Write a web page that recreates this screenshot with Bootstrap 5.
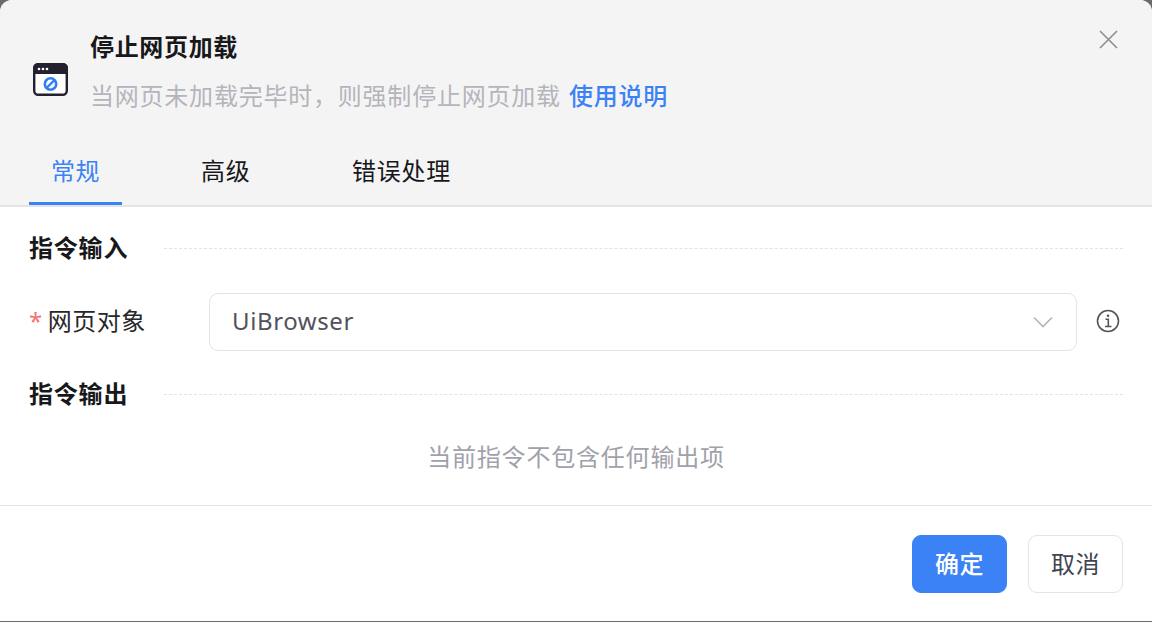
<!DOCTYPE html>
<html lang="zh">
<head>
<meta charset="utf-8">
<title>停止网页加载</title>
<link href="https://cdn.jsdelivr.net/npm/bootstrap@5.3.0/dist/css/bootstrap.min.css" rel="stylesheet">
<style>
html,body{height:100%;margin:0;}
body{background:#6b6b6b;font-family:"Noto Sans","Noto Sans CJK SC",sans-serif;font-size:24px;overflow:hidden;}
.dlg{width:1152px;height:621px;background:#fff;border-radius:12px 12px 0 0;overflow:hidden;display:flex;flex-direction:column;}
.dlg-head{height:207px;background:#f4f4f5;border-bottom:2px solid #e4e4e7;padding:0 29px;position:relative;flex:none;}
.head-info{height:139px;padding-top:28px;}
.head-icon{width:35px;height:33px;margin:35px 22px 0 4px;flex:none;}
.head-title{font-size:24px;font-weight:700;line-height:38px;color:#18181b;letter-spacing:.67px;}
.head-sub{font-size:24px;line-height:38px;margin-top:10px;color:#b4b5bb;letter-spacing:.78px;white-space:nowrap;font-family:"Noto Sans CJK SC","Noto Sans",sans-serif;}
.head-sub a{color:#3b82f6;text-decoration:none;font-weight:500;letter-spacing:.75px;margin-left:2px;}
.close-x{position:absolute;left:1098px;top:29px;width:21px;height:21px;}
.tab-row{height:66px;gap:56.7px;}
.tab-item{padding:0 22.5px;color:#18181b;line-height:64px;letter-spacing:.7px;white-space:nowrap;}
.tab-item.on{color:#3b82f6;border-bottom:3px solid #3b82f6;height:66px;padding:0 22px;letter-spacing:.4px;}
.dlg-body{flex:1 1 auto;padding:0 29px;}
.sect-row{height:36px;}
.sect-title{font-weight:700;color:#18181b;letter-spacing:.8px;line-height:34px;padding-bottom:2px;font-size:24px;}
.sect-line{border-top:1px dashed #e2e2e8;margin-left:36px;position:relative;top:-1px;}
.field{height:58px;}
.field-label{width:180px;flex:none;color:#27272a;letter-spacing:.5px;white-space:nowrap;padding-bottom:2px;}
.req{color:#f87171;margin-right:5px;}
.sel-box{height:58px;border:1px solid #e4e4e7;border-radius:9px;padding:0 22px 0 22px;color:#52525b;letter-spacing:.6px;}
.sel-text{padding-bottom:2px;}
.info-ic{width:24px;height:24px;margin:-2px 3px 0 19px;flex:none;}
.empty-msg{color:#a1a1aa;text-align:center;letter-spacing:.8px;line-height:36px;}
.dlg-foot{height:116px;border-top:1px solid #e4e4e7;padding:29px 29px 0;gap:21px;flex:none;}
.foot-btn{height:58px;width:95px;border-radius:9px;font-size:24px;padding:0;line-height:1;letter-spacing:.5px;}
.foot-ok{background:#3b82f6;border:1px solid #3b82f6;color:#fff;font-weight:500;}
.foot-no{background:#fff;border:1px solid #e4e4e7;color:#3f4652;}
</style>
</head>
<body>
<div class="dlg">
  <div class="dlg-head">
    <div class="head-info d-flex">
      <svg class="head-icon" viewBox="0 0 35 33" fill="none">
        <rect x="1.200" y="1.200" width="32.600" height="30.600" rx="4" fill="#fff" stroke="#23202f" stroke-width="2.400"/>
        <path d="M0 5a5 5 0 0 1 5-5h25a5 5 0 0 1 5 5v6H0z" fill="#23202f"/>
        <circle cx="6" cy="6" r="1.300" fill="#fff"/><circle cx="10" cy="6" r="1.300" fill="#fff"/><circle cx="14" cy="6" r="1.300" fill="#fff"/>
        <circle cx="17.500" cy="21" r="5.700" stroke="#2f80f5" stroke-width="2.600"/>
        <path d="M14 24.500l7-7" stroke="#2f80f5" stroke-width="2.400"/>
      </svg>
      <div>
        <div class="head-title">停止网页加载</div>
        <div class="head-sub">当网页未加载完毕时&#xFF0C;则强制停止网页加载 <a href="#">使用说明</a></div>
      </div>
    </div>
    <svg class="close-x" viewBox="0 0 21 21" fill="none"><path d="M2 2l17 17M19 2L2 19" stroke="#8f9095" stroke-width="1.700"/></svg>
    <div class="tab-row d-flex">
      <div class="tab-item on">常规</div>
      <div class="tab-item">高级</div>
      <div class="tab-item">错误处理</div>
    </div>
  </div>
  <div class="dlg-body">
    <div class="sect-row d-flex align-items-center" style="margin-top:24px">
      <div class="sect-title">指令输入</div>
      <div class="sect-line flex-grow-1"></div>
    </div>
    <div class="field d-flex align-items-center" style="margin-top:26px">
      <div class="field-label"><span class="req">*</span>网页对象</div>
      <div class="sel-box flex-grow-1 d-flex align-items-center justify-content-between">
        <span class="sel-text">UiBrowser</span>
        <svg width="22" height="12" viewBox="0 0 22 12" fill="none"><path d="M2 1.500l9 9 9-9" stroke="#b5b5ba" stroke-width="1.600"/></svg>
      </div>
      <svg class="info-ic" viewBox="0 0 24 24" fill="none">
        <circle cx="12" cy="12" r="10.500" stroke="#55555a" stroke-width="1.600"/>
        <circle cx="12" cy="6.800" r="1.300" fill="#55555a"/>
        <path d="M9.500 10.300H12.300V17.500M9 17.500h6.500" stroke="#55555a" stroke-width="1.600"/>
      </svg>
    </div>
    <div class="sect-row d-flex align-items-center" style="margin-top:26px">
      <div class="sect-title">指令输出</div>
      <div class="sect-line flex-grow-1"></div>
    </div>
    <div class="empty-msg" style="margin-top:26px">当前指令不包含任何输出项</div>
  </div>
  <div class="dlg-foot d-flex justify-content-end">
    <button type="button" class="btn foot-btn foot-ok">确定</button>
    <button type="button" class="btn foot-btn foot-no">取消</button>
  </div>
</div>
<script src="https://cdn.jsdelivr.net/npm/bootstrap@5.3.0/dist/js/bootstrap.bundle.min.js"></script>
</body>
</html>
